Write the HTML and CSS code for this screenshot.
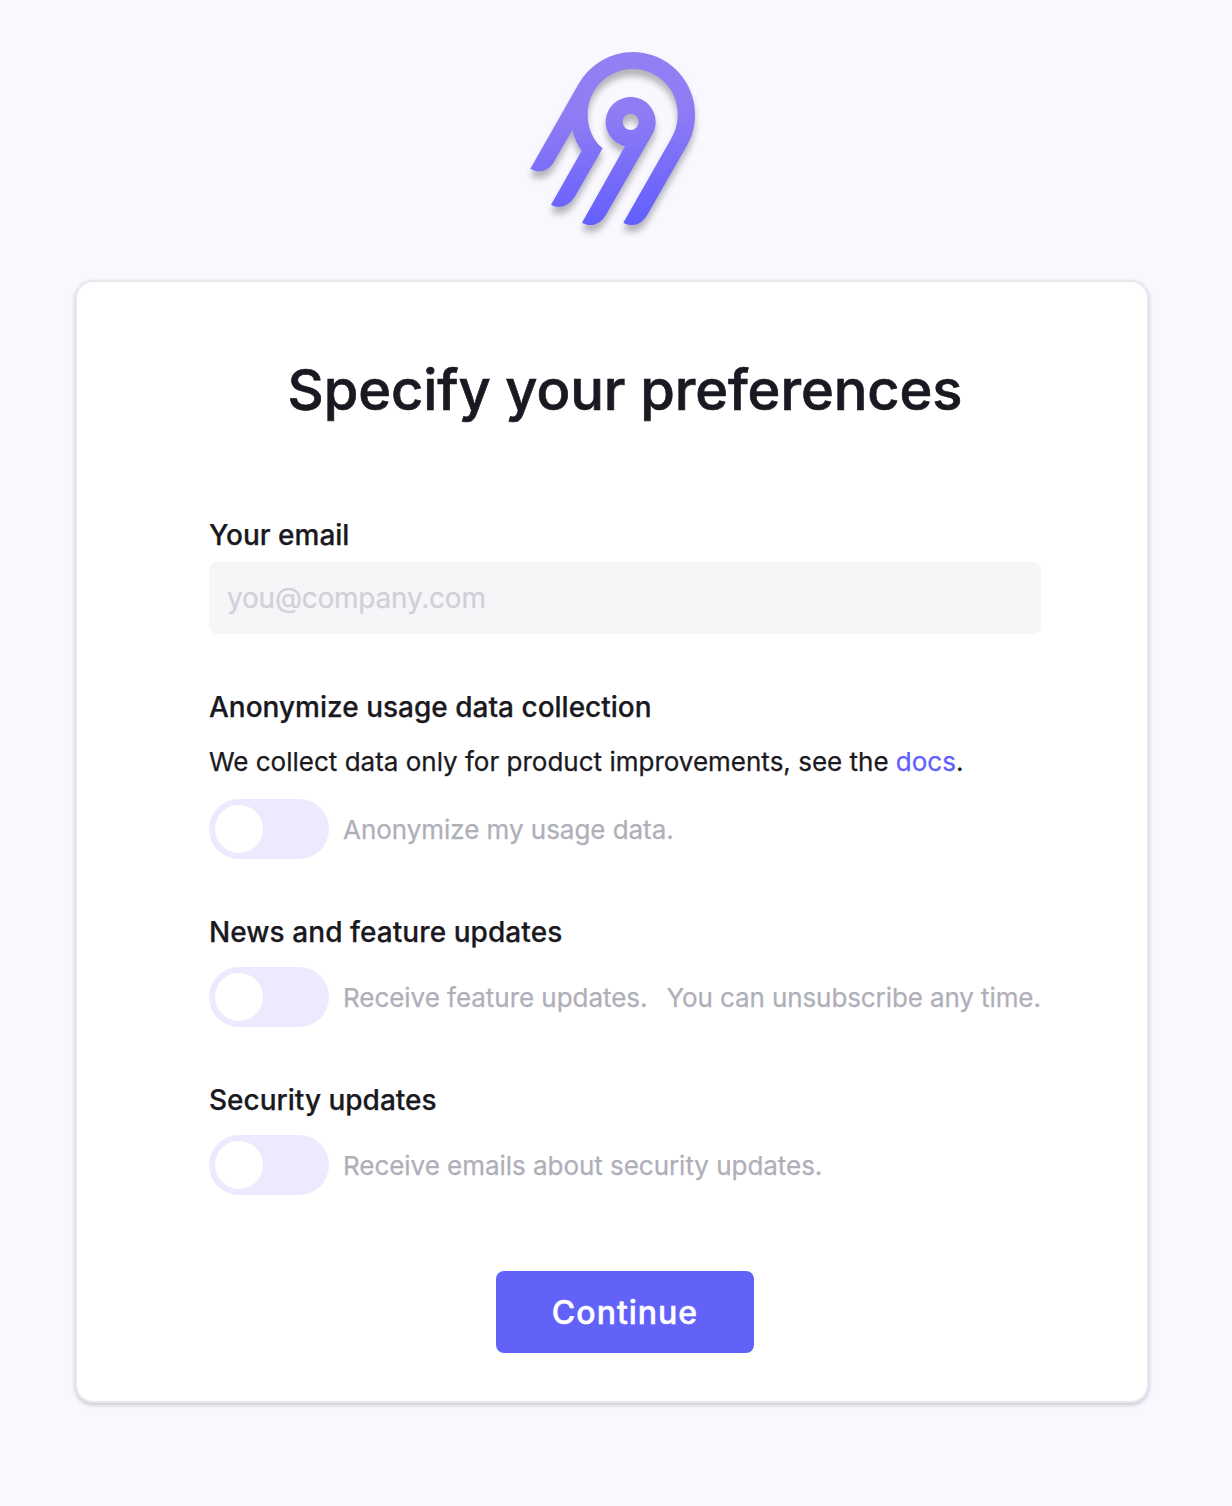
FILE: index.html
```html
<!DOCTYPE html>
<html lang="en">
<head>
<meta charset="utf-8">
<title>Specify your preferences</title>
<link rel="stylesheet" href="styles.css">
</head>
<body>
<main class="page">
  <svg class="logo" viewBox="0 0 630 630" aria-hidden="true">
    <defs>
      <linearGradient id="brand" gradientUnits="userSpaceOnUse" x1="350" y1="30" x2="390" y2="560">
        <stop offset="0" stop-color="#9480f4"/>
        <stop offset=".36" stop-color="#8f7cf4"/>
        <stop offset="1" stop-color="#615eff"/>
      </linearGradient>
    </defs>
    <g fill="url(#brand)" fill-rule="evenodd">
      <path d="M61 386L206 131.500A187.500 187.500 0 0 1 368 36A187.500 187.500 0 0 1 555 225C555 262 545 292 530 318L412 524C395 553 366 564 340 548L485 293C498 270 503 249 503 222A135 135 0 0 0 233 222C233 264 249 302 278 325L196 467C178 498 149 509 123 494L215 332C202 315 192 293 187 270L132 365C115 394 86 401 61 386Z"/>
      <path d="M345 319A75 75 0 1 1 437 245C437 259 434 271 427 283L288 524C271 553 242 563 216 548ZM362 222A24 24 0 1 0 362 270A24 24 0 1 0 362 222Z"/>
    </g>
  </svg>

  <form class="card">
    <h1 class="title">Specify your preferences</h1>

    <section class="field">
      <label class="label label-input" for="email">Your email</label>
      <input class="input" id="email" type="email" placeholder="you@company.com">
    </section>

    <section class="field">
      <h2 class="label">Anonymize usage data collection</h2>
      <p class="description">We collect data only for product improvements, see the <a class="link" href="#">docs</a>.</p>
      <label class="option"><input class="toggle" type="checkbox"><span class="hint">Anonymize my usage data.</span></label>
    </section>

    <section class="field">
      <h2 class="label label-news">News and feature updates</h2>
      <label class="option"><input class="toggle" type="checkbox"><span class="hint">Receive feature updates.</span><span class="hint hint-extra">You can unsubscribe any time.</span></label>
    </section>

    <section class="field">
      <h2 class="label">Security updates</h2>
      <label class="option"><input class="toggle" type="checkbox"><span class="hint">Receive emails about security updates.</span></label>
    </section>

    <button class="submit" type="button">Continue</button>
  </form>
</main>
</body>
</html>
```
FILE: styles.css
```css
* {
  box-sizing: border-box;
}

body {
  margin: 0;
  background: #f9f8ff;
  color: #1a1921;
  font-family: Inter, "Liberation Sans", sans-serif;
  -webkit-text-stroke: 0.25px currentColor;
}

.page {
  display: flex;
  flex-direction: column;
  align-items: center;
  min-height: 1506px;
  padding: 40px 83px 0 75px;
}

.logo {
  width: 210px;
  height: 210px;
  margin: 0 0 30px 6px;
  filter: drop-shadow(0 7px 3px rgba(0, 0, 0, 0.27));
}

.card {
  display: flex;
  flex-direction: column;
  width: 1074px;
  height: 1123px;
  padding: 74px 106px 0 132px;
  background: #fff;
  border: 2px solid #e8e7ed;
  border-radius: 18px;
  box-shadow: 0 2px 4px rgba(26, 25, 33, 0.22);
}

.title {
  margin: 0 0 94px;
  font-size: 56px;
  font-weight: 500;
  line-height: 68px;
  letter-spacing: -0.09px;
  text-align: center;
  white-space: nowrap;
  -webkit-text-stroke-width: 0.7px;
}

.field {
  display: flex;
  flex-direction: column;
  margin-bottom: 56px;
}

.label {
  margin: 0 0 18px;
  font-size: 28px;
  font-weight: 500;
  line-height: 34px;
}

.label-input {
  margin-bottom: 10px;
}

.label-news {
  letter-spacing: 0.07px;
}

.input {
  height: 72px;
  margin: 0;
  padding: 0 18px;
  border: 0;
  border-radius: 8px;
  background: #f6f6f9;
  font: inherit;
  font-size: 28px;
  letter-spacing: -0.22px;
}

.input::placeholder {
  color: #d1d0d9;
}

.description {
  margin: 4px 0 21px;
  font-size: 26px;
  line-height: 32px;
  white-space: nowrap;
}

.link {
  color: #615eff;
  text-decoration: none;
}

.option {
  display: flex;
  align-items: center;
}

.toggle {
  display: flex;
  align-items: center;
  flex: none;
  width: 120px;
  height: 60px;
  margin: 0 14px 0 0;
  padding: 6px;
  appearance: none;
  background: #eceaff;
  border-radius: 30px;
}

.toggle::before {
  content: "";
  width: 48px;
  height: 48px;
  background: #fff;
  border-radius: 50%;
}

.hint {
  padding-top: 2px;
  color: #afafba;
  font-size: 26px;
  line-height: 32px;
  letter-spacing: -0.04px;
  white-space: nowrap;
}

.hint-extra {
  margin-left: 19px;
  letter-spacing: -0.1px;
}

.submit {
  align-self: center;
  width: 258px;
  height: 82px;
  margin-top: 20px;
  border: 0;
  border-radius: 8px;
  background: #6262f8;
  color: #fff;
  font: inherit;
  font-size: 32px;
  font-weight: 500;
  letter-spacing: 1px;
  -webkit-text-stroke-width: 0.5px;
}
```
